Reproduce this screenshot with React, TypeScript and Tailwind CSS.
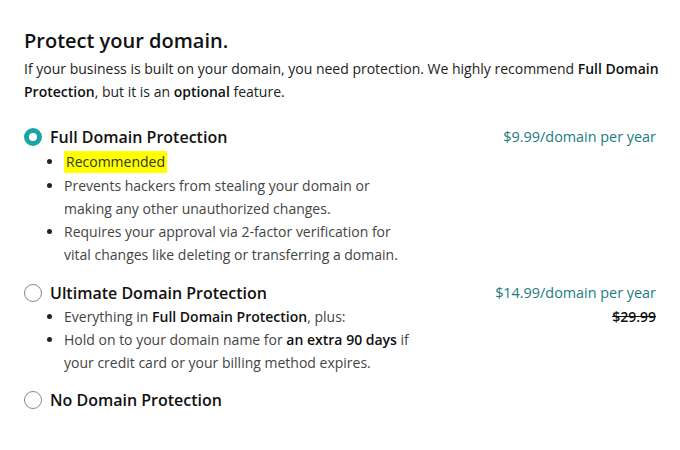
import React, { useState } from 'react';

interface Option {
  id: string;
  title: string;
  price?: string;
  oldPrice?: string;
  listClass?: string;
  bullets: React.ReactNode[];
}

const options: Option[] = [
  {
    id: 'full',
    title: 'Full Domain Protection',
    price: '$9.99',
    listClass: 'mt-[1px]',
    bullets: [
      <span className="inline-block bg-[#ffff00] px-[2px] leading-[22px] mb-[1px] text-[#333]">Recommended</span>,
      <>Prevents hackers from stealing your domain or making any other unauthorized changes.</>,
      <>Requires your approval via 2-factor verification for vital changes like deleting or transferring a domain.</>,
    ],
  },
  {
    id: 'ultimate',
    title: 'Ultimate Domain Protection',
    price: '$14.99',
    oldPrice: '$29.99',
    listClass: 'mb-[-1px]',
    bullets: [
      <>
        Everything in <b className="font-semibold text-[#111]">Full Domain Protection</b>, plus:
      </>,
      <>
        Hold on to your domain name for <b className="font-semibold text-[#111]">an extra 90 days</b> if your credit card or your billing method expires.
      </>,
    ],
  },
  { id: 'none', title: 'No Domain Protection', bullets: [] },
];

const Radio = ({ checked }: { checked: boolean }) =>
  checked ? (
    <span className="w-[18px] h-[18px] rounded-full border-[5px] border-[#1ba3a6] bg-white shrink-0" />
  ) : (
    <span className="w-[18px] h-[18px] rounded-full border border-[#888] bg-white shrink-0" />
  );

export default function App() {
  const [selected, setSelected] = useState('full');

  return (
    <div className="w-[680px] h-[450px] bg-white px-6 pt-[27px] text-[#111]" style={{ fontFamily: '"Open Sans", Inter, sans-serif' }}>
      {/* Header */}
      <h2 className="text-[20px] leading-[28px] font-semibold text-[#111]">Protect your domain.</h2>
      <p className="mt-[2px] w-[645px] text-[14px] leading-[23px] text-[#222]">
        If your business is built on your domain, you need protection. We highly recommend{' '}
        <b className="font-semibold text-[#111]">Full Domain Protection</b>, but it is an{' '}
        <b className="font-semibold text-[#111]">optional</b> feature.
      </p>

      {/* Options */}
      <div className="mt-[22px] flex flex-col gap-[15px]">
        {options.map((o) => (
          <div key={o.id} className="cursor-pointer" onClick={() => setSelected(o.id)}>
            <div className="flex items-center">
              <Radio checked={selected === o.id} />
              <span className="ml-2 text-[16px] leading-[24px] font-semibold text-[#111]">{o.title}</span>
              {o.price && (
                <span className="ml-auto text-[14.4px] leading-[24px] text-[#1b7b80]">
                  {o.price}/domain per year
                </span>
              )}
            </div>
            {o.bullets.length > 0 && (
              <div className={`flex ${o.listClass ?? ''}`}>
                <ul className="ml-[40px] list-disc pl-0 text-[14px] leading-[23px] text-[#444] w-[350px] marker:text-[#222]">
                  {o.bullets.map((b, i) => (
                    <li key={i}>{b}</li>
                  ))}
                </ul>
                {o.oldPrice && (
                  <span className="ml-auto text-[14px] leading-[23px] font-semibold text-[#111] line-through">
                    {o.oldPrice}
                  </span>
                )}
              </div>
            )}
          </div>
        ))}
      </div>
    </div>
  );
}
